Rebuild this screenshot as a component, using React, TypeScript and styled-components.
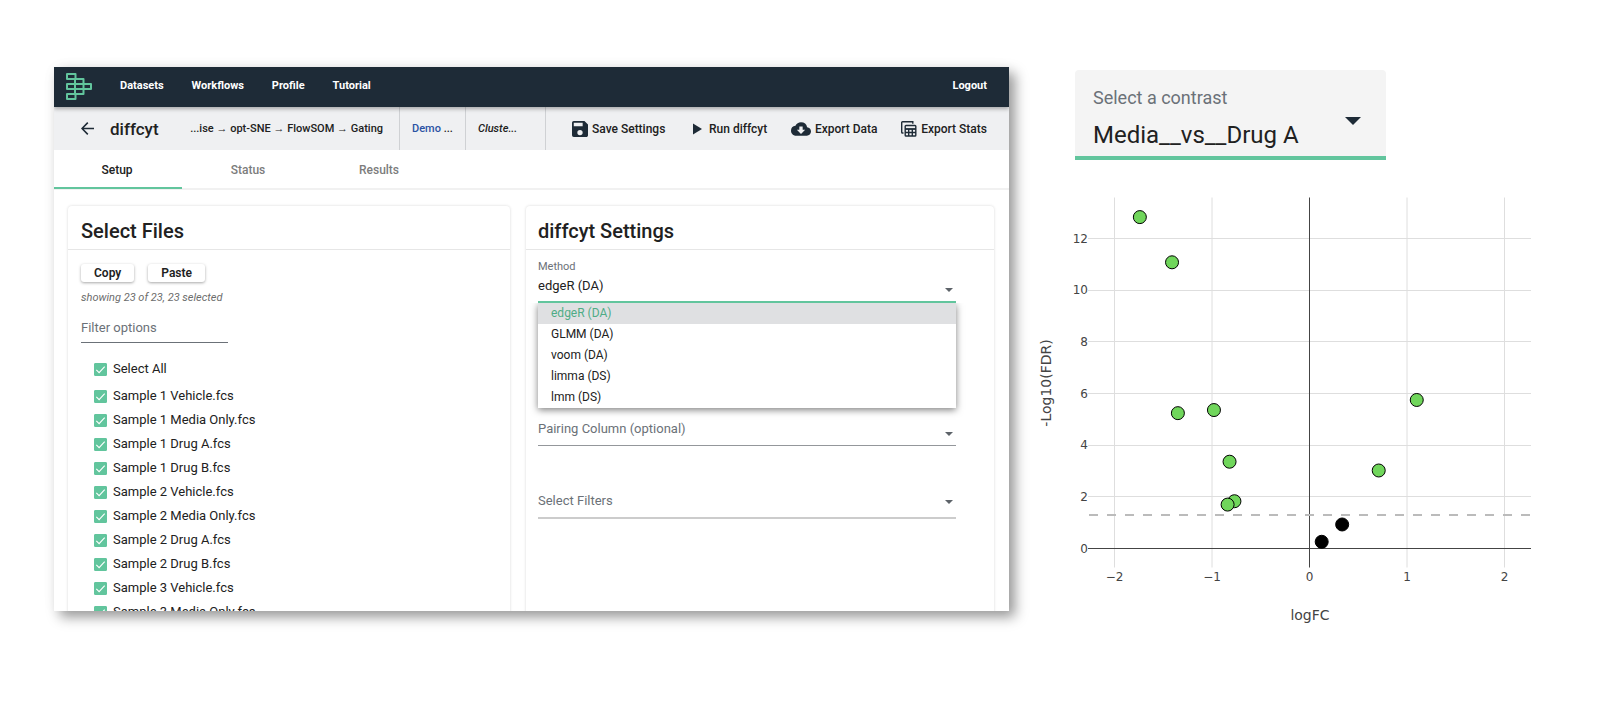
import React, { useState } from "react";
import styled, { createGlobalStyle, css } from "styled-components";

const GlobalStyle = createGlobalStyle`
  *, *::before, *::after { box-sizing: border-box; }
  body { margin: 0; background: #fff; color: #212121; font-family: Roboto, "Liberation Sans", sans-serif; }
  ul { list-style: none; margin: 0; padding: 0; }
  button, input, select { font-family: inherit; color: inherit; }
`;

const Page = styled.div`
  display: grid;
  grid-template-columns: 955fr 500fr;
  grid-template-rows: minmax(0, 1fr);
  gap: 26px;
  height: 100vh;
  min-height: 480px;
  padding: 67px 65px 95px 54px;
`;

const AppWindow = styled.div`
  display: flex;
  flex-direction: column;
  min-width: 0;
  min-height: 0;
  background: #fff;
  box-shadow: 6px 6px 12px rgba(0, 0, 0, 0.4), 0 0 16px rgba(0, 0, 0, 0.03);
  overflow: hidden;
`;

const NavBar = styled.header`
  position: relative;
  display: flex;
  align-items: center;
  flex: none;
  height: 40px;
  padding: 0 22px 2px 12px;
  background: #1e2b37;
  box-shadow: 0 2px 4px rgba(0, 0, 0, 0.3);
  z-index: 1;
`;

const NavLinks = styled.nav`
  display: flex;
  flex: 1;
  gap: 28px;
  margin-left: 28px;
`;

const NavLink = styled.a`
  color: #fff;
  font-size: 11px;
  line-height: 16px;
  font-weight: 700;
  text-decoration: none;
`;

const ToolBar = styled.div`
  display: flex;
  align-items: center;
  flex: none;
  height: 43px;
  padding-right: 22px;
  background: #eff0f2;
`;

const IconButton = styled.button`
  display: flex;
  padding: 0;
  margin-left: 27px;
  border: 0;
  background: none;
  color: #1e2b37;
`;

const PageTitle = styled.h1`
  flex: none;
  width: 84px;
  margin: 0 0 0 16px;
  font-size: 17px;
  line-height: 24px;
  font-weight: 500;
`;

const Crumb = styled.div<{ $width: number; $trail?: boolean; $italic?: boolean }>`
  display: flex;
  align-items: center;
  align-self: stretch;
  justify-content: ${(p) => (p.$trail ? "flex-end" : "flex-start")};
  flex: none;
  width: ${(p) => p.$width}px;
  padding: ${(p) => (p.$trail ? "0 16px 0 0" : "0 0 0 12px")};
  border-right: 1px solid #cfd1d4;
  font-size: 11px;
  font-weight: 500;
  white-space: pre;
  font-style: ${(p) => (p.$italic ? "italic" : "normal")};
  a { color: #2a52a3; text-decoration: none; }
`;

const Actions = styled.div`
  display: flex;
  flex: 1;
  justify-content: space-between;
  padding-left: 26px;
`;

const Action = styled.button`
  display: flex;
  align-items: center;
  gap: 4px;
  padding: 0;
  border: 0;
  background: none;
  font-size: 12px;
  line-height: 20px;
  font-weight: 500;
  white-space: nowrap;
  svg { color: #1e2b37; }
`;

const Tabs = styled.div`
  display: flex;
  gap: 3px;
  flex: none;
  height: 40px;
  border-bottom: 2px solid #f1f1f1;
`;

const Tab = styled.button<{ $active: boolean }>`
  width: 128px;
  height: 39px;
  padding: 2px 2px 0 0;
  border: 0;
  border-bottom: 2px solid ${(p) => (p.$active ? "#62c59d" : "transparent")};
  background: none;
  color: ${(p) => (p.$active ? "#212121" : "#7c7c7c")};
  font-size: 12px;
  font-weight: 500;
`;

const Panels = styled.main`
  display: grid;
  grid-template-columns: 442fr 468fr;
  gap: 16px;
  flex: 1;
  min-height: 0;
  padding: 16px 15px 0 14px;
  overflow: hidden;
`;

const Card = styled.section<{ $inset: number }>`
  min-width: 0;
  border-radius: 4px 4px 0 0;
  box-shadow: 0 0 3px rgba(0, 0, 0, 0.16);
  > * { padding-left: ${(p) => p.$inset}px; padding-right: 12px; }
`;

const CardTitle = styled.h2`
  margin: 0;
  padding-top: 13px;
  padding-bottom: 5px;
  border-bottom: 1px solid #e6e6e6;
  font-size: 20px;
  line-height: 25px;
  font-weight: 500;
`;

const CardBody = styled.div<{ $top: number }>`
  padding-top: ${(p) => p.$top}px;
`;

const ButtonRow = styled.div`
  display: flex;
  gap: 14px;
`;

const RaisedButton = styled.button`
  height: 18px;
  padding: 0 13px;
  border: 0;
  border-radius: 3px;
  background: #fff;
  box-shadow: 0 1px 3px rgba(0, 0, 0, 0.35);
  font-size: 12px;
  line-height: 16px;
  font-weight: 600;
`;

const Hint = styled.p`
  margin: 8px 0 0;
  color: #6c6c6c;
  font-size: 11px;
  line-height: 16px;
  font-style: italic;
`;

const FilterInput = styled.input`
  display: block;
  width: 147px;
  height: 29px;
  margin: 8px 0 14px;
  padding: 0 0 2px;
  border: 0;
  border-bottom: 1px solid #6b7178;
  background: none;
  font-size: 13px;
  outline: 0;
  &::placeholder { color: #6b7178; opacity: 1; }
`;

const FileList = styled.ul`
  padding-left: 13px;
`;

const FileRow = styled.li`
  height: 24px;
  &:first-child { height: 27px; }
`;

const CheckLabel = styled.label`
  display: flex;
  align-items: center;
  gap: 6px;
  font-size: 13px;
  line-height: 24px;
`;

const CheckBox = styled.span`
  position: relative;
  display: flex;
  width: 13px;
  height: 13px;
  input {
    appearance: none;
    width: 13px;
    height: 13px;
    margin: 0;
    border: 1px solid #62c59d;
    border-radius: 1px;
  }
  input:checked { background: #62c59d; }
  svg { position: absolute; inset: 0; pointer-events: none; }
  input:not(:checked) + svg { display: none; }
`;

const Fields = styled.div`
  width: 418px;
  max-width: 100%;
`;

const Field = styled.div`
  position: relative;
`;

const FieldLabel = styled.label`
  display: block;
  height: 14px;
  color: #6b7178;
  font-size: 11px;
  line-height: 12px;
`;

const lines = {
  active: css`height: 28px; padding-bottom: 5px; border-bottom: 2px solid #62c59d; color: #212121;`,
  plain: css`height: 33px; padding-bottom: 2px; border-bottom: 1px solid #94979b; color: #6b7178;`,
  soft: css`height: 36px; border-bottom: 2px solid #cccccc; color: #6b7178;`,
};

const FieldSelect = styled.select<{ $line: keyof typeof lines }>`
  appearance: none;
  display: block;
  width: 100%;
  padding: 0 20px 0 0;
  border: 0;
  border-radius: 0;
  background: none;
  font-size: 13px;
  outline: 0;
  ${(p) => lines[p.$line]}
`;

const Caret = styled.span<{ $bottom: number }>`
  position: absolute;
  right: 3px;
  bottom: ${(p) => p.$bottom}px;
  border: 4px solid transparent;
  border-top-color: #5d6369;
  border-bottom: 0;
  pointer-events: none;
`;

const Menu = styled.ul`
  position: absolute;
  top: 100%;
  left: 0;
  right: 0;
  z-index: 1;
  background: #fff;
  box-shadow: 0 2px 7px rgba(0, 0, 0, 0.5);
  clip-path: inset(0 -12px -14px);
`;

const MenuItem = styled.li<{ $selected: boolean }>`
  padding: 0 13px;
  background: ${(p) => (p.$selected ? "#dfe0e2" : "#fff")};
  color: ${(p) => (p.$selected ? "#4fac86" : "#212121")};
  font-size: 12px;
  line-height: 21px;
`;

const Spacer = styled.div<{ $height: number }>`
  height: ${(p) => p.$height}px;
`;

const Side = styled.aside`
  display: flex;
  flex-direction: column;
  min-width: 0;
  padding-top: 3px;
`;

const Contrast = styled.div`
  position: relative;
  flex: none;
  width: 311px;
  max-width: 100%;
  margin: 0 0 30px 40px;
  padding: 17px 17px 0 18px;
  border-bottom: 4px solid #62c59d;
  border-radius: 4px 4px 0 0;
  background: #f4f4f4;
  label {
    display: block;
    color: #6b7178;
    font-size: 18px;
    line-height: 22px;
  }
  select {
    appearance: none;
    display: block;
    width: 100%;
    height: 47px;
    padding: 4px 0 0;
    border: 0;
    background: none;
    font-size: 24px;
    outline: 0;
  }
`;

const BigCaret = styled.span`
  position: absolute;
  right: 25px;
  top: 47px;
  border: 8px solid transparent;
  border-top-color: #1e2b37;
  border-bottom: 0;
  pointer-events: none;
`;

const Plot = styled.svg`
  display: block;
  flex: none;
  width: 100%;
  height: auto;
  text { fill: #444; font-family: "DejaVu Sans", sans-serif; font-size: 12px; }
  .axis { font-size: 14px; }
`;

const files = [
  "Select All",
  "Sample 1 Vehicle.fcs",
  "Sample 1 Media Only.fcs",
  "Sample 1 Drug A.fcs",
  "Sample 1 Drug B.fcs",
  "Sample 2 Vehicle.fcs",
  "Sample 2 Media Only.fcs",
  "Sample 2 Drug A.fcs",
  "Sample 2 Drug B.fcs",
  "Sample 3 Vehicle.fcs",
  "Sample 3 Media Only.fcs",
];

const methods = ["edgeR (DA)", "GLMM (DA)", "voom (DA)", "limma (DS)", "lmm (DS)"];

type Point = { x: number; y: number; significant: boolean };

const points: Point[] = [
  { x: -1.74, y: 12.83, significant: true },
  { x: -1.41, y: 11.08, significant: true },
  { x: -1.35, y: 5.24, significant: true },
  { x: -0.98, y: 5.36, significant: true },
  { x: -0.82, y: 3.36, significant: true },
  { x: -0.77, y: 1.83, significant: true },
  { x: -0.84, y: 1.7, significant: true },
  { x: 1.1, y: 5.75, significant: true },
  { x: 0.71, y: 3.02, significant: true },
  { x: 0.335, y: 0.93, significant: false },
  { x: 0.125, y: 0.26, significant: false },
];

const px = (x: number) => 274.5 + x * 97.5;
const py = (y: number) => 358.5 - y * 25.83;

function Logo() {
  return (
    <svg width="26" height="27" viewBox="0 0 26 27" fill="none" stroke="#62c59d" strokeWidth="2" strokeLinejoin="round" role="img" aria-label="Home">
      <rect x="1" y="1" width="8.500" height="5" />
      <rect x="9" y="6" width="8.500" height="5" />
      <path d="M1 11h24v5H1zM9 11v5M17.500 11v5" />
      <rect x="9" y="16" width="8.500" height="5" />
      <rect x="1" y="21" width="8.500" height="5" />
    </svg>
  );
}

function VolcanoPlot() {
  return (
    <Plot viewBox="0 0 500 440" role="img" aria-label="logFC against -Log10(FDR)">
      {[-2, -1, 1, 2].map((v) => (
        <path key={v} d={`M${px(v)} 7.5V377.5`} stroke="#dedede" />
      ))}
      {[2, 4, 6, 8, 10, 12].map((v) => (
        <path key={v} d={`M53 ${Math.floor(py(v)) + 0.5}H496`} stroke="#dedede" />
      ))}
      <path d="M274.5 7.5V377.5M53 358.5H496" stroke="#444" />
      <path d="M54 325H496" stroke="#bbb" strokeWidth="2" strokeDasharray="9 9" />
      {points.map((p, i) => (
        <circle key={i} cx={px(p.x)} cy={py(p.y)} r="6.5" stroke="#000" strokeWidth="1" fill={p.significant ? "#70d65b" : "#000"} />
      ))}
      {[0, 2, 4, 6, 8, 10, 12].map((v) => (
        <text key={v} x="53" y={py(v) + 4} textAnchor="end">{v}</text>
      ))}
      {[-2, -1, 0, 1, 2].map((v) => (
        <text key={v} x={px(v)} y="391" textAnchor="middle">{String(v).replace("-", "−")}</text>
      ))}
      <text className="axis" x="275" y="430" textAnchor="middle">logFC</text>
      <text className="axis" transform="translate(16 193) rotate(-90)" textAnchor="middle">-Log10(FDR)</text>
    </Plot>
  );
}

export default function App() {
  const [tab, setTab] = useState("Setup");
  const [method, setMethod] = useState(methods[0]);
  return (
    <>
      <GlobalStyle />
      <Page>
        <AppWindow>
          <NavBar>
            <Logo />
            <NavLinks>
              {["Datasets", "Workflows", "Profile", "Tutorial"].map((t) => (
                <NavLink key={t} href="#">{t}</NavLink>
              ))}
            </NavLinks>
            <NavLink href="#">Logout</NavLink>
          </NavBar>
          <ToolBar>
            <IconButton aria-label="Back">
              <svg width="13" height="13" viewBox="0 0 13 13" fill="none" stroke="currentColor" strokeWidth="1.6">
                <path d="M13 6.500H1.500M6.800 .6L1 6.500l5.800 5.900" />
              </svg>
            </IconButton>
            <PageTitle>diffcyt</PageTitle>
            <Crumb $width={206} $trail>...ise → opt-SNE → FlowSOM → Gating</Crumb>
            <Crumb $width={66}><a href="#">Demo</a> ...</Crumb>
            <Crumb $width={80} $italic>Cluste...</Crumb>
            <Actions>
              <Action>
                <svg width="16" height="16" viewBox="3 3 18 18" fill="currentColor"><path d="M17 3H5a2 2 0 0 0-2 2v14a2 2 0 0 0 2 2h14c1.100 0 2-.9 2-2V7l-4-4zm-5 16a3 3 0 1 1 0-6 3 3 0 0 1 0 6zm3-10H5V5h10v4z" /></svg>
                Save Settings
              </Action>
              <Action>
                <svg width="16" height="12" viewBox="0 0 16 12" fill="currentColor"><path d="M4 0.500l9 5.500-9 5.500z" /></svg>
                Run diffcyt
              </Action>
              <Action>
                <svg width="20" height="20" viewBox="0 0 24 24" fill="currentColor"><path d="M19.350 10.040A7.490 7.490 0 0 0 12 4C9.110 4 6.600 5.640 5.350 8.040A5.994 5.994 0 0 0 0 14c0 3.310 2.690 6 6 6h13c2.760 0 5-2.240 5-5 0-2.640-2.050-4.780-4.650-4.960zM17 13l-5 5-5-5h3V9h4v4h3z" /></svg>
                Export Data
              </Action>
              <Action>
                <svg width="16" height="16" viewBox="0 0 16 16" fill="none" stroke="currentColor" strokeWidth="1.400">
                  <path d="M2.500 12H1.500a.8.8 0 0 1-.8-.8V1.500a.8.800 0 0 1 .8-.8h10.300v2" />
                  <rect x="4.200" y="4.500" width="10.600" height="10.500" rx="0.800" />
                  <path d="M4 8h11" strokeWidth="1.800" />
                  <path d="M4 11.500h11M7.700 8v7M11.300 8v7" />
                </svg>
                Export Stats
              </Action>
            </Actions>
          </ToolBar>
          <Tabs role="tablist">
            {["Setup", "Status", "Results"].map((t) => (
              <Tab key={t} role="tab" aria-selected={t === tab} $active={t === tab} onClick={() => setTab(t)}>{t}</Tab>
            ))}
          </Tabs>
          <Panels>
            <Card $inset={13}>
              <CardTitle>Select Files</CardTitle>
              <CardBody $top={14}>
                <ButtonRow>
                  <RaisedButton>Copy</RaisedButton>
                  <RaisedButton>Paste</RaisedButton>
                </ButtonRow>
                <Hint>showing 23 of 23, 23 selected</Hint>
                <FilterInput aria-label="Filter options" placeholder="Filter options" />
                <FileList>
                  {files.map((f) => (
                    <FileRow key={f}>
                      <CheckLabel>
                        <CheckBox>
                          <input type="checkbox" defaultChecked />
                          <svg viewBox="0 0 14 14" fill="none" stroke="#fff" strokeWidth="1.200"><path d="M2.500 7.500l3 3 6-6.500" /></svg>
                        </CheckBox>
                        {f}
                      </CheckLabel>
                    </FileRow>
                  ))}
                </FileList>
              </CardBody>
            </Card>
            <Card $inset={12}>
              <CardTitle>diffcyt Settings</CardTitle>
              <CardBody $top={11}>
                <Fields>
                  <Field>
                    <FieldLabel htmlFor="method">Method</FieldLabel>
                    <FieldSelect id="method" $line="active" value={method} onChange={(e) => setMethod(e.target.value)}>
                      {methods.map((m) => <option key={m}>{m}</option>)}
                    </FieldSelect>
                    <Caret $bottom={11} />
                    <Menu role="listbox" aria-label="Method">
                      {methods.map((m) => (
                        <MenuItem key={m} role="option" aria-selected={m === method} $selected={m === method} onClick={() => setMethod(m)}>{m}</MenuItem>
                      ))}
                    </Menu>
                  </Field>
                  <Spacer $height={110} />
                  <Field>
                    <FieldSelect aria-label="Pairing Column (optional)" $line="plain"><option>Pairing Column (optional)</option></FieldSelect>
                    <Caret $bottom={10} />
                  </Field>
                  <Spacer $height={37} />
                  <Field>
                    <FieldSelect aria-label="Select Filters" $line="soft"><option>Select Filters</option></FieldSelect>
                    <Caret $bottom={15} />
                  </Field>
                </Fields>
              </CardBody>
            </Card>
          </Panels>
        </AppWindow>
        <Side>
          <Contrast>
            <label htmlFor="contrast">Select a contrast</label>
            <select id="contrast"><option>Media__vs__Drug A</option></select>
            <BigCaret />
          </Contrast>
          <VolcanoPlot />
        </Side>
      </Page>
    </>
  );
}
